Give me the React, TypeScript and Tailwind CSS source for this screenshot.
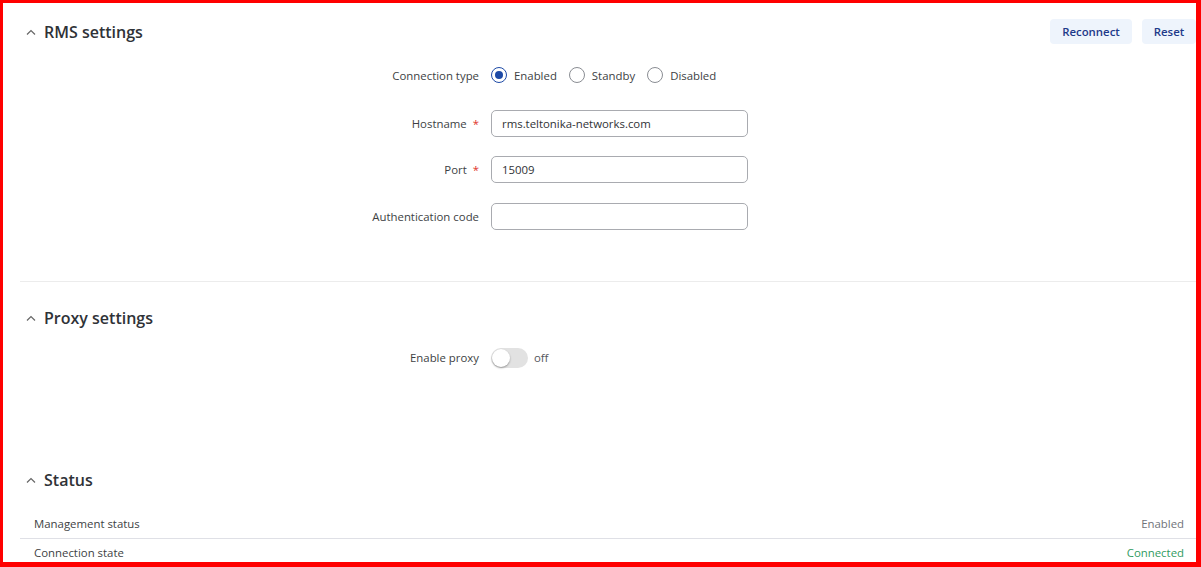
import React, { useState } from 'react';

const font = { fontFamily: '"Open Sans", "Liberation Sans", sans-serif' };

function Chevron() {
  return (
    <svg width="10" height="6" viewBox="0 0 10 6" className="mr-[8px]">
      <path d="M1 5.5 L5 1.5 L9 5.5" fill="none" stroke="#666" strokeWidth="1.2" />
    </svg>
  );
}

function SectionTitle({ title }: { title: string }) {
  return (
    <div className="flex items-center pl-[6px] h-[25px]">
      <Chevron />
      <h2 className="text-[16px] font-semibold text-[#2f3237] leading-none">{title}</h2>
    </div>
  );
}

function Field({
  label,
  required,
  children,
  className = '',
}: {
  label: string;
  required?: boolean;
  children: React.ReactNode;
  className?: string;
}) {
  return (
    <div className={`flex items-center h-[27px] ${className}`}>
      <div className="w-[459px] text-right text-[11.4px] text-[#3d3f44]">
        {label}
        {required && <span className="ml-[6px] text-[#e0352b]">*</span>}
      </div>
      <div className="ml-3 flex items-center">{children}</div>
    </div>
  );
}

function Radio({ label, checked, onClick }: { label: string; checked: boolean; onClick: () => void }) {
  return (
    <button onClick={onClick} className="flex items-center mr-3 cursor-pointer">
      <span
        className={`w-4 h-4 rounded-full border flex items-center justify-center ${
          checked ? 'border-[#1d4aa6]' : 'border-[#8a8d93]'
        }`}
      >
        {checked && <span className="w-2 h-2 rounded-full bg-[#1d4aa6]" />}
      </span>
      <span className="ml-[7px] text-[11.4px] text-[#3d3f44]">{label}</span>
    </button>
  );
}

function TextInput({ value }: { value: string }) {
  return (
    <input
      defaultValue={value}
      className="w-[257px] h-[27px] rounded-[5px] border border-[#a9abb0] px-[10px] text-[11.4px] text-[#303236] outline-none"
      style={font}
    />
  );
}

export default function App() {
  const [conn, setConn] = useState<'Enabled' | 'Standby' | 'Disabled'>('Enabled');
  const [proxy, setProxy] = useState(false);

  return (
    <div
      className="w-[1201px] h-[567px] overflow-hidden bg-white border-t-[3px] border-l-[3px] border-r-[5px] border-b-[5px] border-[#ff0000]"
      style={font}
    >
      <div className="pl-[17px] h-full overflow-hidden">
        {/* RMS settings */}
        <div className="flex items-center justify-between pt-4">
          <SectionTitle title="RMS settings" />
          <div className="flex gap-[10px]">
            <button className="w-[82px] h-[25px] rounded-[4px] bg-[#eef4fc] text-[11.4px] font-semibold text-[#1e3a8a]">
              Reconnect
            </button>
            <button className="w-[54px] h-[25px] rounded-[4px] bg-[#eef4fc] text-[11.4px] font-semibold text-[#1e3a8a]">
              Reset
            </button>
          </div>
        </div>

        <Field label="Connection type" className="mt-[18px]">
          {(['Enabled', 'Standby', 'Disabled'] as const).map((o) => (
            <Radio key={o} label={o} checked={conn === o} onClick={() => setConn(o)} />
          ))}
        </Field>
        <Field label="Hostname" required className="mt-[21px]">
          <TextInput value="rms.teltonika-networks.com" />
        </Field>
        <Field label="Port" required className="mt-[19px]">
          <TextInput value="15009" />
        </Field>
        <Field label="Authentication code" className="mt-[20px]">
          <TextInput value="" />
        </Field>

        <div className="mt-[51px] border-t border-[#ececec]" />

        {/* Proxy settings */}
        <div className="mt-[23px]">
          <SectionTitle title="Proxy settings" />
        </div>
        <Field label="Enable proxy" className="mt-[14px]">
          <button
            onClick={() => setProxy(!proxy)}
            className={`relative w-[37px] h-[20px] rounded-full ${proxy ? 'bg-[#1d4aa6]' : 'bg-[#e2e2e2]'}`}
          >
            <span
              className={`absolute top-[1px] w-[18px] h-[18px] rounded-full bg-white shadow-[0_1px_2px_rgba(0,0,0,0.35)] ${
                proxy ? 'left-[18px]' : 'left-[1px]'
              }`}
            />
          </button>
          <span className="ml-[6px] text-[11.4px] text-[#55585e]">{proxy ? 'on' : 'off'}</span>
        </Field>

        {/* Status */}
        <div className="mt-[96px]">
          <SectionTitle title="Status" />
        </div>
        <div className="mt-[17px] text-[11.4px]">
          <div className="flex items-center justify-between h-[30px] pl-[14px] pr-3 border-b border-[#dfe0e6]">
            <span className="text-[#3d3f44]">Management status</span>
            <span className="text-[#70737a]">Enabled</span>
          </div>
          <div className="flex items-center justify-between h-[28px] pl-[14px] pr-3">
            <span className="text-[#3d3f44]">Connection state</span>
            <span className="text-[#2f9b5f]">Connected</span>
          </div>
        </div>
      </div>
    </div>
  );
}
